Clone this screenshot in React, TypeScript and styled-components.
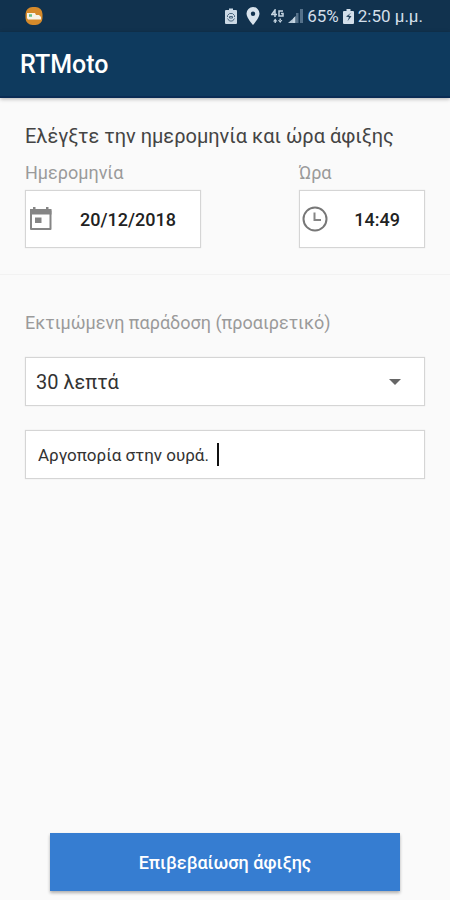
import React, { useState } from "react";
import styled, { createGlobalStyle } from "styled-components";

const GlobalStyle = createGlobalStyle`
  *, *::before, *::after { box-sizing: border-box; }
  body { margin: 0; background: #fafafa; }
  body, button, input, select { font-family: Roboto, "Noto Sans", sans-serif; }
`;

const Screen = styled.div`
  display: flex;
  flex-direction: column;
  min-height: 100vh;
  color: #333;
`;

const StatusBar = styled.div`
  display: flex;
  align-items: center;
  justify-content: space-between;
  height: 32px;
  padding: 0 27px 0 25px;
  background: #11324e;
  color: #d3dfea;
  font-size: 17px;
  line-height: 32px;
  white-space: nowrap;
`;

const StatusGroup = styled.div`
  display: flex;
  align-items: center;
  gap: 4px;
`;

const StatusIcon = styled.svg<{ $gap?: number }>`
  display: block;
  flex: none;
  margin-right: ${(p) => p.$gap ?? 0}px;
`;

const AppBar = styled.header`
  display: flex;
  align-items: center;
  height: 66px;
  padding: 2px 20px 0;
  background: #0e3a5e;
  border-bottom: 2px solid #0a2c54;
  box-shadow: 0 1px 4px rgba(0, 0, 0, 0.3);
`;

const AppTitle = styled.h1`
  margin: 0;
  color: #fff;
  font-size: 25px;
  font-weight: 500;
  line-height: 32px;
`;

const Form = styled.form`
  display: flex;
  flex: 1;
  flex-direction: column;
`;

const Section = styled.section<{ $divided?: boolean }>`
  display: flex;
  flex-direction: column;
  padding: ${(p) => (p.$divided ? "26px 25px" : "36px 25px 24px")};
  border-bottom: ${(p) => (p.$divided ? "1px solid #f2f2f2" : "none")};
`;

const Heading = styled.h2`
  margin: 0 0 13px;
  color: #444;
  font-size: 20px;
  font-weight: 400;
  line-height: 24px;
`;

const FieldRow = styled.div`
  display: flex;
  justify-content: space-between;
`;

const Field = styled.div<{ $width: number }>`
  display: flex;
  flex-direction: column;
  flex: 0 1 ${(p) => p.$width}px;
  min-width: 0;
`;

const Label = styled.label<{ $gap: number }>`
  margin-bottom: ${(p) => p.$gap}px;
  color: #9a9a9a;
  font-size: 18px;
  line-height: 24px;
`;

const Box = styled.div<{ $height: number }>`
  display: flex;
  align-items: center;
  height: ${(p) => p.$height}px;
  background: #fff;
  border: 1px solid #d5d5d5;
  box-shadow: 0 0 1px #ddd;
`;

const PickerInput = styled.input`
  flex: 1;
  min-width: 0;
  padding: 0 24px 0 0;
  border: 0;
  outline: 0;
  background: transparent;
  color: #222;
  font-size: 18px;
  font-weight: 500;
  text-align: right;
`;

const FieldIcon = styled.svg`
  flex: none;
  margin-left: 1px;
`;

const SelectBox = styled(Box)`
  margin-bottom: 24px;
  padding-right: 23px;
`;

const Select = styled.select`
  flex: 1;
  min-width: 0;
  height: 100%;
  padding: 0 10px;
  border: 0;
  outline: 0;
  appearance: none;
  background: transparent;
  color: #333;
  font-size: 20px;
`;

const NoteBox = styled(Box)`
  padding: 0 12px;
`;

const NoteInput = styled.input`
  field-sizing: content;
  max-width: 100%;
  padding: 0;
  border: 0;
  outline: 0;
  background: transparent;
  caret-color: transparent;
  color: #333;
  font-size: 17px;
  line-height: 24px;
`;

const Caret = styled.span`
  width: 2px;
  height: 23px;
  margin-left: 8px;
  background: #111;
`;

const Footer = styled.footer`
  display: flex;
  margin-top: auto;
  padding: 0 50px 9px;
`;

const ConfirmButton = styled.button`
  flex: 1;
  height: 58px;
  padding: 0;
  border: 0;
  background: #367dd1;
  box-shadow: 0 2px 3px rgba(0, 0, 0, 0.3);
  color: #fff;
  font-size: 18px;
  font-weight: 500;
`;

export default function App() {
  const [date, setDate] = useState("20/12/2018");
  const [time, setTime] = useState("14:49");
  const [note, setNote] = useState("Αργοπορία στην ουρά.");

  return (
    <Screen>
      <GlobalStyle />
      <StatusBar>
        <StatusIcon width="18" height="18" viewBox="0 0 18 18">
          <rect x="0.5" y="0" width="17" height="18" rx="7" fill="#d58a2b" />
          <path d="M2 6h8l1 2h3l2 2v2.500H3L2 11z" fill="#f7f3e8" />
          <path d="M4 8.500h3" stroke="#65bd85" strokeWidth="2.500" />
        </StatusIcon>
        <StatusGroup>
          <StatusIcon width="12" height="16" viewBox="0 0 12 16" $gap={5}>
            <path d="M1 2h3V0.5h4V2h3a1 1 0 0 1 1 1v12a1 1 0 0 1-1 1H1a1 1 0 0 1-1-1V3a1 1 0 0 1 1-1z" fill="#cbd9e5" />
            <path d="M2.500 9V7.500l2-2h3l2 2V9M2.500 10.500l2 2.500h3l2-2.500M4.500 8.500h3v1.500h-3z" fill="none" stroke="#4a667e" strokeWidth="1" />
          </StatusIcon>
          <StatusIcon width="14" height="18" viewBox="0 0 14 18" $gap={7}>
            <path fillRule="evenodd" d="M7 0a6.500 6.500 0 0 0-6.500 6.500C.5 11 7 18 7 18s6.500-7 6.500-11.500A6.500 6.500 0 0 0 7 0zm0 4.500a2.200 2.200 0 1 1 0 4.400 2.200 2.200 0 0 1 0-4.400z" fill="#d8e3ec" />
          </StatusIcon>
          <StatusIcon width="13" height="15" viewBox="0 0 13 15">
            <path d="M4 8V1L.8 5.500H6M12 2H8v5h4V4.500h-2" fill="none" stroke="#c5d5e2" strokeWidth="1.500" />
            <path d="M2 12.500l2.200-3 2.200 3zM7 11l2.200 3 2.200-3zM3.500 12h1.400v2H3.500zM8.500 9.500h1.400v2H8.500z" fill="#c5d5e2" />
          </StatusIcon>
          <StatusIcon width="15" height="14" viewBox="0 0 15 14">
            <path d="M0 14l7-6v6z" fill="#b4c6d5" />
            <path d="M8 4h2.500v10H8zM12 0h3v14h-3z" fill="#55718a" />
            <path d="M5 9.500L7.500 7v7H5z" fill="#c5d5e2" />
          </StatusIcon>
          <span>65%</span>
          <StatusIcon width="11" height="15" viewBox="0 0 11 15">
            <path d="M1 2h2.500V0h4v2H10a1 1 0 0 1 1 1v11a1 1 0 0 1-1 1H1a1 1 0 0 1-1-1V3a1 1 0 0 1 1-1z" fill="#d3dfea" />
            <path d="M8.500 3.500L3 7.500l3 .8-1.500 4 4-5-3-.8z" fill="#22415c" />
          </StatusIcon>
          <span>2:50 μ.μ.</span>
        </StatusGroup>
      </StatusBar>
      <AppBar>
        <AppTitle>RTMoto</AppTitle>
      </AppBar>
      <Form onSubmit={(e) => e.preventDefault()}>
        <Section $divided>
          <Heading>Ελέγξτε την ημερομηνία και ώρα άφιξης</Heading>
          <FieldRow>
            <Field $width={176}>
              <Label htmlFor="date" $gap={5}>Ημερομηνία</Label>
              <Box $height={58}>
                <FieldIcon width="28" height="28" viewBox="0 0 28 28">
                  <path d="M4 6h19.500v18H4z" fill="none" stroke="#858585" strokeWidth="2" strokeLinejoin="round" />
                  <path d="M3 4h21.500v5.500H3zM6 2h2.500v4H6zM19 2h2.500v4H19zM8 12.500h6.500v5.500H8z" fill="#858585" />
                </FieldIcon>
                <PickerInput id="date" value={date} onChange={(e) => setDate(e.target.value)} />
              </Box>
            </Field>
            <Field $width={126}>
              <Label htmlFor="time" $gap={5}>Ώρα</Label>
              <Box $height={58}>
                <FieldIcon width="28" height="28" viewBox="0 0 28 28">
                  <circle cx="14" cy="14" r="11.500" fill="none" stroke="#777" strokeWidth="2" />
                  <path d="M13.500 7.500v7.500h6.500" fill="none" stroke="#858585" strokeWidth="2" />
                </FieldIcon>
                <PickerInput id="time" value={time} onChange={(e) => setTime(e.target.value)} />
              </Box>
            </Field>
          </FieldRow>
        </Section>
        <Section>
          <Label htmlFor="delay" $gap={22}>Εκτιμώμενη παράδοση (προαιρετικό)</Label>
          <SelectBox $height={49}>
            <Select id="delay" defaultValue="30">
              <option value="30">30 λεπτά</option>
            </Select>
            <svg width="12" height="6" viewBox="0 0 12 6">
              <path d="M0 0h12L6 6z" fill="#666" />
            </svg>
          </SelectBox>
          <NoteBox $height={49}>
            <NoteInput aria-label="Σχόλιο" value={note} onChange={(e) => setNote(e.target.value)} />
            <Caret />
          </NoteBox>
        </Section>
        <Footer>
          <ConfirmButton type="submit">Επιβεβαίωση άφιξης</ConfirmButton>
        </Footer>
      </Form>
    </Screen>
  );
}
